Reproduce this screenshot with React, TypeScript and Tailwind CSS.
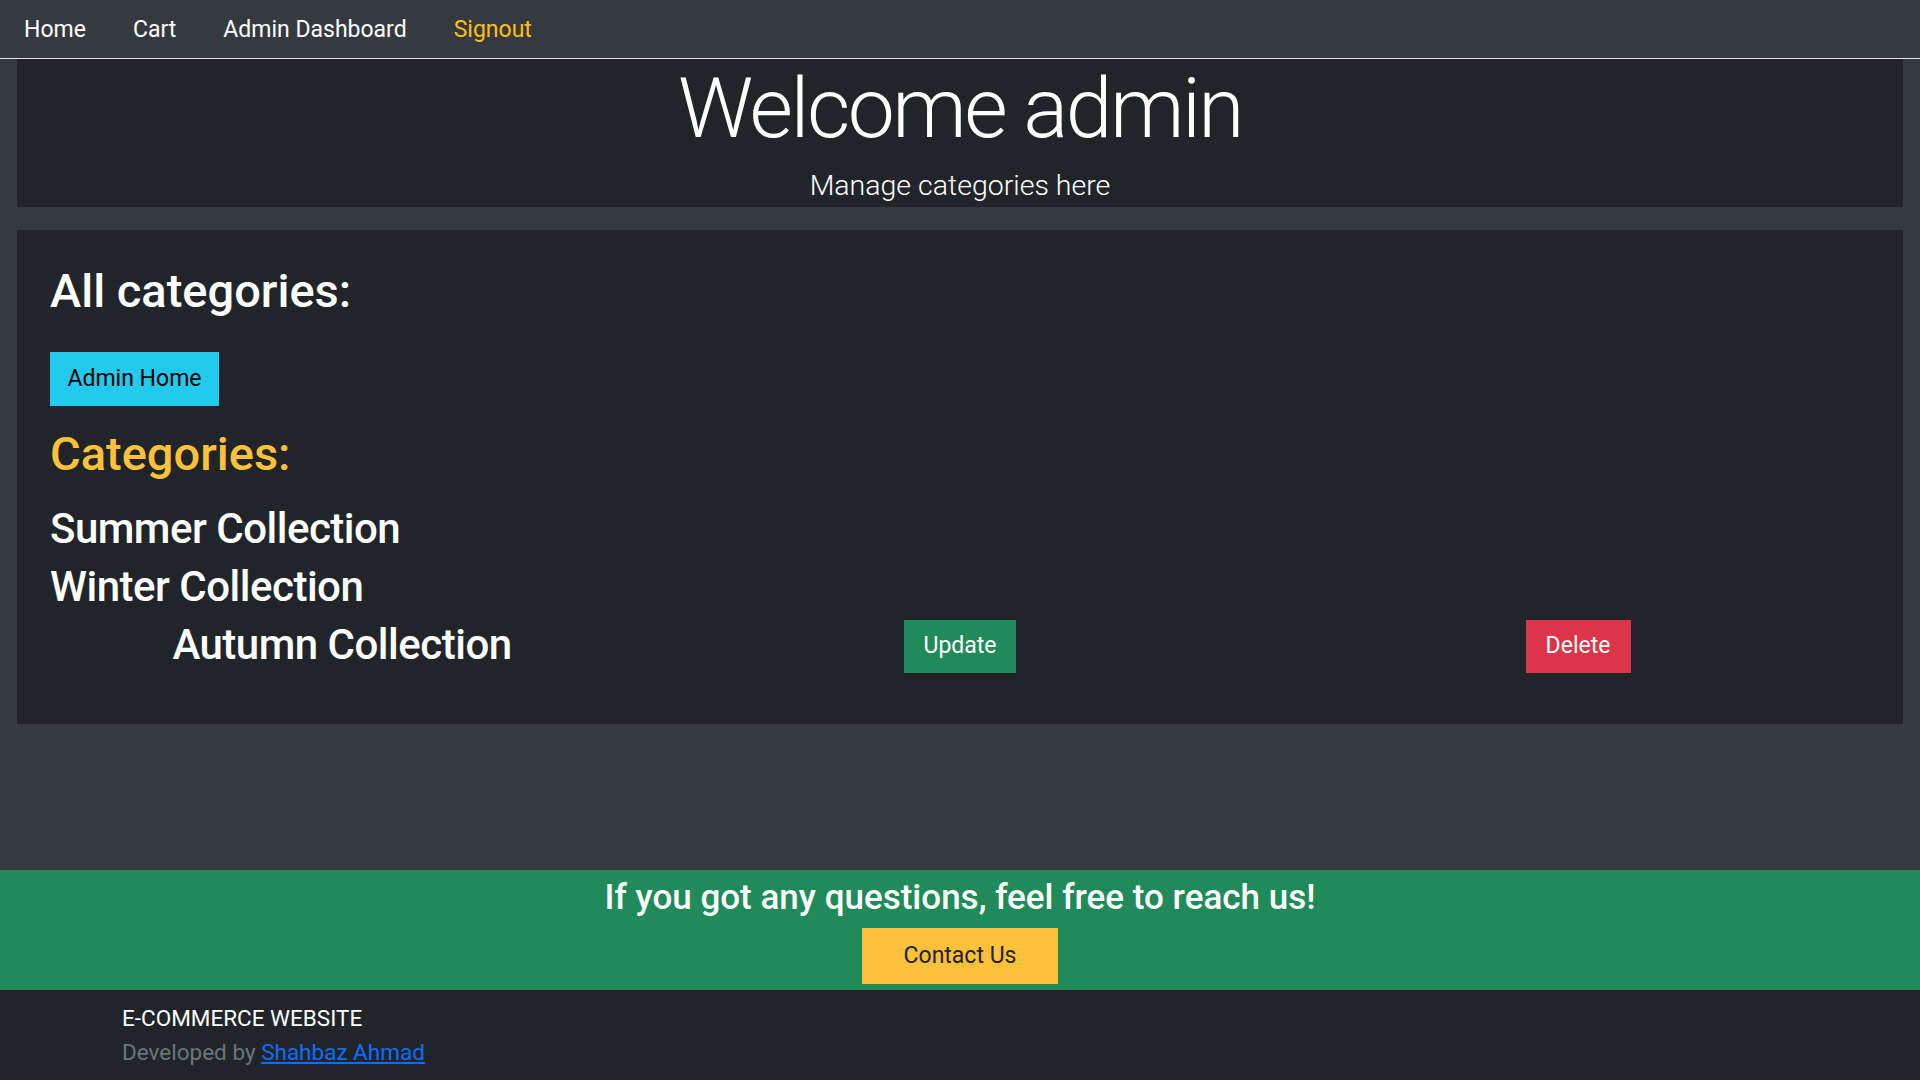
import React from "react";

export default function App() {
  return (
    <div
      className="min-h-screen bg-[#343a40] flex flex-col"
      style={{ fontFamily: "Roboto, 'Noto Sans', sans-serif" }}
    >
      <nav className="h-[59px] border-b border-[#dee2e6] flex items-center pt-[2px] pl-[24px] gap-[47px] text-[23px] text-white">
        <a>Home</a>
        <a>Cart</a>
        <a>Admin Dashboard</a>
        <a className="text-[#ffc107]">Signout</a>
      </nav>

      <section className="mx-[17px] bg-[#212529] h-[148px] flex flex-col items-center text-white">
        <h1 className="text-[84px] font-light leading-none tracking-[-2.5px] mt-[8px]">Welcome admin</h1>
        <p className="text-[28.5px] font-light leading-none mt-[21px]">Manage categories here</p>
      </section>

      <section className="mx-[17px] mt-[23px] bg-[#212529] h-[494px] px-[16px] pt-[37px] text-white">
        <div className="px-[17px]">
          <h2 className="text-[47px] font-medium leading-none">All categories:</h2>
          <button className="mt-[38px] h-[54px] w-[169px] bg-[#22cbee] text-black text-[23px]">Admin Home</button>
          <h2 className="mt-[24px] text-[47px] font-medium leading-none text-[#ffc13b]">Categories:</h2>
          <div className="mt-[23px] text-[42px] tracking-[-0.5px] font-medium leading-[58px]">Summer Collection</div>
          <div className="text-[42px] tracking-[-0.5px] font-medium leading-[58px]">Winter Collection</div>
        </div>
        <div className="grid grid-cols-3 items-start">
          <div className="text-center text-[42px] tracking-[-0.5px] font-medium leading-[58px]">Autumn Collection</div>
          <div className="flex justify-center mt-[4px]">
            <button className="h-[53px] w-[112px] bg-[#218a5a] text-white text-[23px]">Update</button>
          </div>
          <div className="flex justify-center mt-[4px]">
            <button className="h-[53px] w-[105px] bg-[#dc3449] text-white text-[23px]">Delete</button>
          </div>
        </div>
      </section>

      <div className="flex-1" />

      <section className="h-[120px] bg-[#218a5a] flex flex-col items-center text-white">
        <h3 className="text-[35px] font-medium leading-none mt-[10px]">If you got any questions, feel free to reach us!</h3>
        <button className="mt-[13px] h-[56px] w-[196px] bg-[#ffc13b] text-[#212529] text-[23px]">Contact Us</button>
      </section>

      <footer className="h-[90px] bg-[#212529] pl-[122px] pt-[11px] text-[22.5px]">
        <div className="text-white leading-[34px]">E-COMMERCE WEBSITE</div>
        <div className="text-[#6c757d] leading-[34px]">
          Developed by <a className="text-[#0d6efd] underline">Shahbaz Ahmad</a>
        </div>
      </footer>
    </div>
  );
}
